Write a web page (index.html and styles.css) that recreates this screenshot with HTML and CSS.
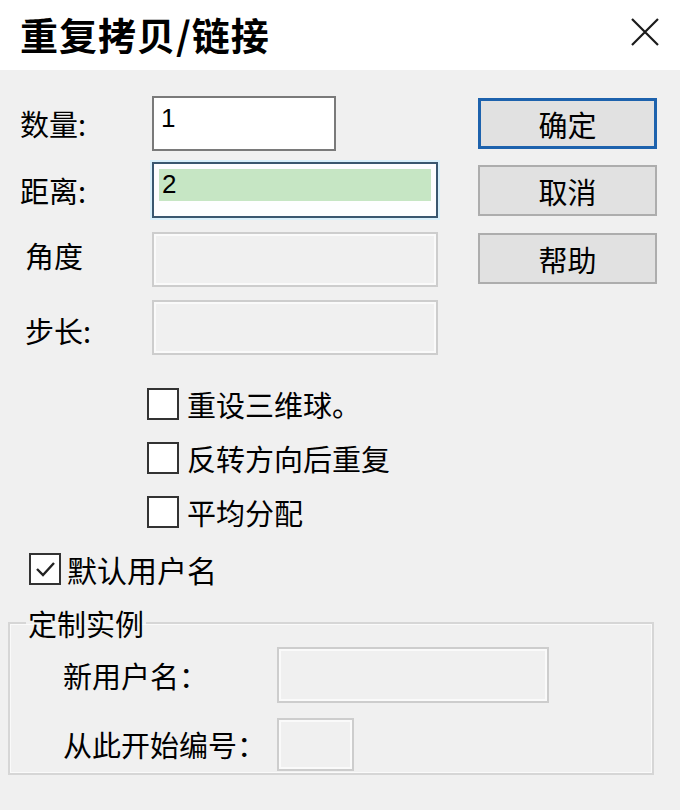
FILE: index.html
```html
<!DOCTYPE html>
<html lang="zh-CN">
<head>
  <meta charset="UTF-8">
  <meta name="viewport" content="width=device-width, initial-scale=1.0">
  <title>重复拷贝/链接</title>
  <link rel="stylesheet" href="styles.css">
</head>
<body>
  <div class="dialog">
    <div class="titlebar">
      <span class="title">重复拷贝/链接</span>
      <svg class="close" width="28" height="28" viewBox="0 0 28 28">
        <path d="M1 1 L27 27 M27 1 L1 27" stroke="#1a1a1a" stroke-width="2.2" fill="none"/>
      </svg>
    </div>

    <div class="content">
      <div class="top">
        <div class="fields">
          <div class="row row-count">
            <span class="label">数量:</span>
            <div class="edit edit-short">1</div>
          </div>
          <div class="row row-dist">
            <span class="label">距离:</span>
            <div class="edit edit-focus"><span class="sel">2</span></div>
          </div>
          <div class="row row-angle">
            <span class="label label-indent">角度</span>
            <div class="edit edit-off"></div>
          </div>
          <div class="row row-step">
            <span class="label label-indent">步长:</span>
            <div class="edit edit-off"></div>
          </div>
        </div>

        <div class="buttons">
          <div class="btn btn-default">确定</div>
          <div class="btn">取消</div>
          <div class="btn">帮助</div>
        </div>
      </div>

      <div class="checks">
        <div class="check"><span class="box"></span><span>重设三维球。</span></div>
        <div class="check"><span class="box"></span><span>反转方向后重复</span></div>
        <div class="check"><span class="box"></span><span>平均分配</span></div>
      </div>

      <div class="check check-default">
        <span class="box">
          <svg width="27" height="27" viewBox="0 0 27 27">
            <path d="M5 13 L11 19 L22 7" stroke="#222" stroke-width="2.4" fill="none"/>
          </svg>
        </span>
        <span>默认用户名</span>
      </div>

      <fieldset class="group">
        <legend>定制实例</legend>
        <div class="group-row">
          <span class="glabel">新用户名：</span>
          <div class="edit edit-off edit-name"></div>
        </div>
        <div class="group-row group-row-num">
          <span class="glabel">从此开始编号：</span>
          <div class="edit edit-off edit-num"></div>
        </div>
      </fieldset>
    </div>
  </div>
</body>
</html>
```

FILE: styles.css
```css
body {
  margin: 0;
  background: #f0f0f0;
  font-family: "Noto Sans CJK SC", "Liberation Sans", sans-serif;
  color: #000;
}
.dialog {
  width: 680px;
  height: 810px;
  overflow: hidden;
}
.titlebar {
  height: 70px;
  background: #fff;
  display: flex;
  align-items: center;
  justify-content: space-between;
  padding: 0 21px 0 20px;
}
.title {
  font-size: 38px;
  font-weight: bold;
  letter-spacing: 1px;
  margin-top: -4px;
}
.close {
  margin-top: -6px;
}
.content {
  padding: 26px 0 0 20px;
}
.top {
  display: flex;
  align-items: flex-start;
}
.fields {
  width: 418px;
}
.row {
  display: flex;
  align-items: center;
  height: 55px;
}
.row-dist { margin-top: 11px; height: 56px; }
.row-angle { margin-top: 14px; }
.row-step { margin-top: 13px; }
.label {
  width: 132px;
  font-size: 29px;
  line-height: 1;
}
.label-indent {
  padding-left: 5px;
  width: 127px;
}
.row-step .label { margin-top: 6px; }
.row-angle .label { margin-top: -8px; }
.edit {
  box-sizing: border-box;
  height: 100%;
  width: 286px;
  border: 2px solid #cdcdcd;
  background: #f0f0f0;
  box-shadow: inset 0 0 0 2px #fafafa;
  font-family: "Liberation Sans", sans-serif;
  font-size: 26px;
  line-height: 30px;
  padding: 5px 0 0 7px;
}
.edit-short {
  width: 184px;
  background: #fff;
  border-color: #7a7a7a;
  box-shadow: none;
}
.edit-focus {
  background: #fdfeff;
  border-color: #3a5870;
  box-shadow: 0 0 0 2px #d9f0fb;
  padding: 5px 5px 0 5px;
}
.sel {
  display: block;
  height: 32px;
  background: #c6e6c4;
  padding-left: 3px;
}
.buttons {
  margin-left: 40px;
  margin-top: 2px;
  display: flex;
  flex-direction: column;
  gap: 16px;
}
.btn {
  box-sizing: border-box;
  width: 179px;
  height: 51px;
  background: #e1e1e1;
  border: 2px solid #adadad;
  font-size: 29px;
  display: flex;
  align-items: center;
  justify-content: center;
}
.btn + .btn + .btn { margin-top: 1px; }
.btn-default {
  border: 3px solid #1d62ad;
}
.checks {
  margin-top: 33px;
  padding-left: 127px;
  display: flex;
  flex-direction: column;
  gap: 22px;
}
.check {
  display: flex;
  align-items: center;
  height: 32px;
  font-size: 29px;
  gap: 8px;
}
.box {
  box-sizing: border-box;
  width: 32px;
  height: 32px;
  border: 2px solid #333;
  background: #fff;
  display: flex;
  align-items: center;
  justify-content: center;
}
.check-default {
  margin-top: 25px;
  margin-left: 9px;
  gap: 6px;
  font-size: 30px;
}
.group {
  box-sizing: border-box;
  margin: 20px 0 0 -12px;
  padding: 0;
  width: 646px;
  height: 170px;
  border: 2px solid #d6d6d6;
  box-shadow: inset 0 0 0 1px #fafafa;
  min-width: 0;
}
.group legend {
  font-size: 29px;
  line-height: 36px;
  padding: 0 2px;
  margin-left: 16px;
}
.group-row {
  display: flex;
  align-items: center;
  height: 56px;
  margin-top: 6px;
  padding-left: 53px;
}
.group-row-num {
  margin-top: 15px;
  height: 53px;
}
.glabel {
  width: 214px;
  font-size: 29px;
  line-height: 1;
}
.edit-name {
  width: 272px;
}
.edit-num {
  width: 77px;
}
```
